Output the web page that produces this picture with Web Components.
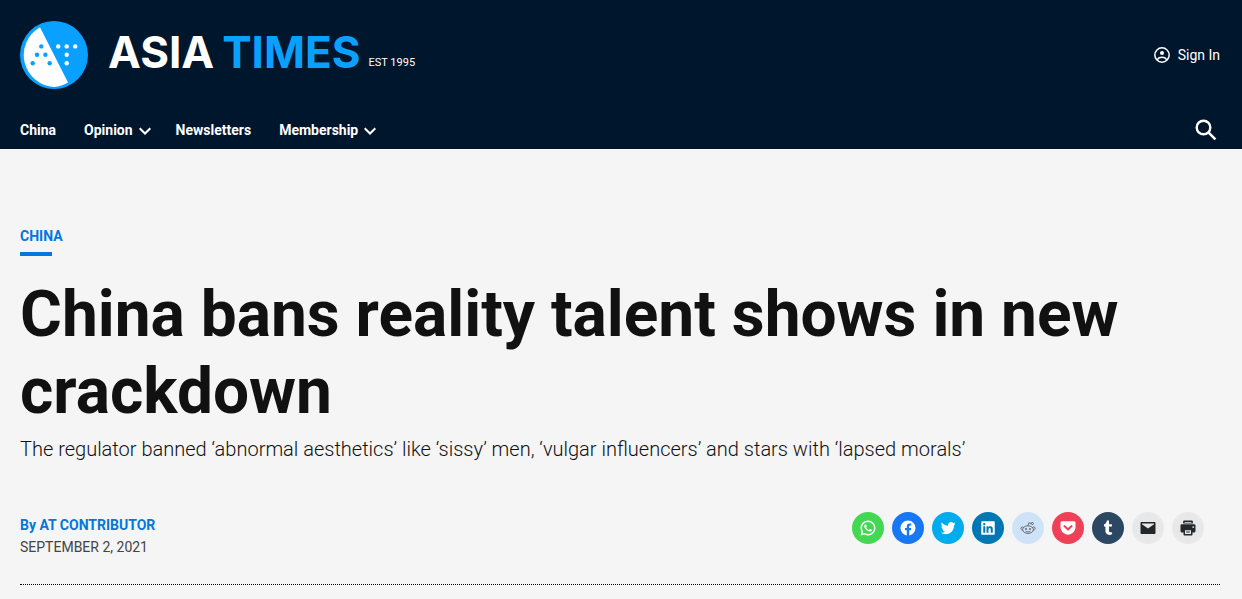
<!DOCTYPE html>
<html lang="en">
<head>
<meta charset="utf-8">
<meta name="viewport" content="width=device-width, initial-scale=1">
<title>China bans reality talent shows in new crackdown - Asia Times</title>
<style>
  body { margin: 0; background: #f5f5f5; color: #111; font-family: Roboto, sans-serif; font-size: 14px; }
</style>
</head>
<body>
<site-header>
  <nav-item href="#china">China</nav-item>
  <nav-item href="#opinion" menu>Opinion</nav-item>
  <nav-item href="#newsletters">Newsletters</nav-item>
  <nav-item href="#membership" menu>Membership</nav-item>
</site-header>
<article-header>
  <category-link slot="category" href="#china">China</category-link>
  <span slot="title">China bans reality talent shows in new crackdown</span>
  <span slot="summary">The regulator banned ‘abnormal aesthetics’ like ‘sissy’ men, ‘vulgar influencers’ and stars with ‘lapsed morals’</span>
  <by-line slot="byline" author="AT CONTRIBUTOR" datetime="2021-09-02">September 2, 2021</by-line>
  <share-bar slot="share"></share-bar>
</article-header>

<script>
const define = (name, markup, setup) => customElements.define(name, class extends HTMLElement {
  constructor() {
    super();
    const template = document.createElement('template');
    template.innerHTML = markup;
    this.attachShadow({ mode: 'open' }).append(template.content.cloneNode(true));
  }
  connectedCallback() { if (setup) setup(this, this.shadowRoot); }
});

define('site-logo', `
<style>
  :host { display: block; }
  a { display: flex; align-items: center; color: #fff; text-decoration: none; }
  svg { width: 68px; height: 68px; margin-right: 20px; }
  .name { font: 700 44px/52px Inter, sans-serif; display: flex; gap: 8px; margin-bottom: 6px; }
  .times { color: #0aa0ff; }
  .est { font-size: 11px; line-height: 16px; margin: 16px 0 0 8px; }
</style>
<a href="#home">
  <svg viewBox="0 0 68 68" aria-hidden="true">
    <circle cx="34" cy="34" r="34" fill="#0aa0ff"/>
    <path d="M20 6.2A32 32 0 0 0 34 66a32 32 0 0 0 14-4.5z" fill="#fff"/>
    <g fill="#0aa0ff"><circle cx="21.3" cy="25.4" r="2.2"/><circle cx="17" cy="33.8" r="2.2"/><circle cx="25.4" cy="33.8" r="2.2"/><circle cx="12.7" cy="42.2" r="2.2"/><circle cx="29.7" cy="42.2" r="2.2"/></g>
    <g fill="#fff"><circle cx="38.2" cy="25.4" r="2.2"/><circle cx="46.7" cy="25.4" r="2.2"/><circle cx="55.2" cy="25.4" r="2.2"/><circle cx="46.7" cy="33.8" r="2.2"/><circle cx="46.7" cy="42.2" r="2.2"/></g>
  </svg>
  <span class="name"><span>ASIA</span><span class="times">TIMES</span></span>
  <span class="est">EST 1995</span>
</a>`);

define('nav-item', `
<style>
  :host { display: block; }
  a { display: flex; align-items: center; gap: 6px; color: #fff; font-weight: 700; line-height: 20px; text-decoration: none; }
  svg { display: none; width: 12px; height: 8px; margin-top: 2px; }
  :host([menu]) svg { display: block; }
</style>
<a><slot></slot><svg viewBox="0 0 12 8" fill="none" stroke="#fff" stroke-width="2" aria-hidden="true"><path d="M.7 1.2 6 6.5l5.300-5.300"/></svg></a>`,
(host, root) => { root.querySelector('a').href = host.getAttribute('href'); });

define('site-header', `
<style>
  :host { display: block; background: #00162d; color: #fff; padding: 21px 22px 9px 20px; }
  .row { display: flex; align-items: center; justify-content: space-between; }
  .account { display: flex; align-items: center; gap: 8px; color: #fff; text-decoration: none; line-height: 20px; }
  .account svg { width: 16px; height: 16px; }
  .menu { margin-top: 31px; height: 20px; }
  nav { display: flex; gap: 28px; }
  nav ::slotted([menu]) { margin-right: -3px; }
  button { display: flex; border: 0; padding: 0; margin-right: 3px; background: none; color: #fff; cursor: pointer; }
  button svg { width: 22px; height: 22px; }
</style>
<header>
  <div class="row">
    <site-logo></site-logo>
    <a class="account" href="#signin">
      <svg viewBox="0 0 16 16" fill="none" stroke="#fff" stroke-width="1.500" aria-hidden="true"><circle cx="8" cy="8" r="7.200"/><circle cx="8" cy="6" r="2" fill="#fff" stroke="none"/><path d="M3.500 13.300v-1C4.300 11 6 10.300 8 10.300s3.700.7 4.500 2v1"/></svg>
      Sign In
    </a>
  </div>
  <div class="row menu">
    <nav aria-label="Main"><slot></slot></nav>
    <button type="button" aria-label="Search"><svg viewBox="0 0 22 22" fill="none" stroke="#fff" aria-hidden="true"><circle cx="8.500" cy="8.500" r="6.800" stroke-width="2.400"/><path d="m13.400 13.400 7 7" stroke-width="2.600"/></svg></button>
  </div>
</header>`);

define('category-link', `
<style>
  :host { display: block; }
  a { display: block; color: #0277dc; font-weight: 700; line-height: 20px; text-transform: uppercase; text-decoration: none; }
  a::after { content: ""; display: block; width: 32px; height: 4px; margin-top: 6px; background: currentColor; }
</style>
<a><slot></slot></a>`,
(host, root) => { root.querySelector('a').href = host.getAttribute('href'); });

define('by-line', `
<style>
  :host { display: block; line-height: 22px; }
  .author { color: #0277dc; font-weight: 700; }
  a { color: inherit; text-decoration: none; }
  time { display: block; color: #444; text-transform: uppercase; }
</style>
<div class="author">By <a href="#author"></a></div>
<time><slot></slot></time>`,
(host, root) => {
  root.querySelector('a').textContent = host.getAttribute('author');
  root.querySelector('time').dateTime = host.getAttribute('datetime');
});

define('share-link', `
<style>
  :host { display: block; }
  a { display: grid; place-items: center; width: 32px; height: 32px; border-radius: 50%; background: var(--share-background); color: var(--share-color, #fff); }
  svg { width: 18px; height: 18px; fill: currentColor; }
</style>
<a><svg viewBox="0 0 24 24" aria-hidden="true"></svg></a>`);

const services = [
  ['WhatsApp', '#43d854', '#fff', '<path fill-rule="evenodd" d="M12 2C6.500 2 2 6.500 2 12c0 1.760.480 3.460 1.350 4.980L2 22l5.230-1.240A10 10 0 0 0 12 21.980c5.500 0 10-4.480 10-9.990A9.990 9.990 0 0 0 12 2zm0 2a8 8 0 1 1-3.820 15.010l-.670-.370-.750.180-1.960.460.480-1.780.220-.800-.410-.720A8 8 0 0 1 12 4zM8.480 7.380c-.170 0-.440.060-.670.310-.230.250-.870.850-.870 2.080s.890 2.410 1.020 2.580c.120.170 1.720 2.770 4.260 3.770 2.110.830 2.540.660 2.990.620.460-.040 1.480-.600 1.690-1.190.210-.580.210-1.080.150-1.180-.060-.110-.230-.170-.480-.290-.250-.130-1.480-.730-1.710-.810-.230-.080-.400-.130-.560.120-.170.250-.640.810-.790.980-.150.170-.290.190-.540.070-.250-.130-1.050-.390-2.010-1.240-.740-.660-1.240-1.480-1.390-1.730-.140-.250-.010-.390.110-.510.110-.110.250-.290.380-.440.120-.140.160-.250.250-.420.080-.160.040-.310-.020-.430-.060-.130-.550-1.360-.770-1.850-.190-.420-.380-.430-.560-.440z"/>'],
  ['Facebook', '#1877f2', '#fff', '<path d="M12 2C6.500 2 2 6.500 2 12c0 5 3.700 9.100 8.400 9.900v-7H7.900V12h2.500V9.800c0-2.500 1.500-3.900 3.800-3.900 1.100 0 2.200.2 2.200.2v2.500h-1.300c-1.200 0-1.600.8-1.600 1.600V12h2.800l-.4 2.900h-2.300v7C18.300 21.100 22 17 22 12c0-5.500-4.500-10-10-10z"/>'],
  ['Twitter', '#00aced', '#fff', '<path d="M22.230 5.924c-.736.326-1.527.547-2.357.646.847-.508 1.498-1.312 1.804-2.270-.793.470-1.671.812-2.606.996C18.324 4.498 17.257 4 16.077 4c-2.266 0-4.103 1.837-4.103 4.103 0 .322.036.635.106.935C8.670 8.867 5.647 7.234 3.623 4.751c-.353.606-.556 1.311-.556 2.063 0 1.424.724 2.679 1.825 3.415-.673-.021-1.305-.206-1.859-.513v.052c0 1.988 1.414 3.647 3.292 4.023-.344.094-.707.144-1.081.144-.264 0-.521-.026-.772-.074.522 1.630 2.038 2.816 3.833 2.850-1.404 1.100-3.174 1.756-5.096 1.756-.331 0-.658-.019-.979-.057 1.816 1.164 3.973 1.843 6.290 1.843 7.547 0 11.675-6.252 11.675-11.675 0-.178-.004-.355-.012-.531.801-.577 1.496-1.300 2.046-2.123z"/>'],
  ['LinkedIn', '#0077b5', '#fff', '<path fill-rule="evenodd" d="M19.700 3H4.300C3.582 3 3 3.582 3 4.300v15.400c0 .718.582 1.300 1.300 1.300h15.400c.718 0 1.300-.582 1.300-1.300V4.300c0-.718-.582-1.300-1.300-1.300zM8.339 18.338H5.667v-8.590h2.672zM7.004 8.574a1.548 1.548 0 1 1 0-3.096 1.548 1.548 0 0 1 0 3.096zm11.335 9.764H15.670v-4.177c0-.996-.017-2.278-1.387-2.278-1.389 0-1.601 1.086-1.601 2.206v4.249h-2.667v-8.590h2.559v1.174h.037c.356-.675 1.227-1.387 2.526-1.387 2.703 0 3.203 1.779 3.203 4.092z"/>'],
  ['Reddit', '#cee3f8', '#555', '<g transform="translate(1.700 1.700) scale(.86)"><g fill="none" stroke="currentColor" stroke-width="1.300"><ellipse cx="12" cy="14.500" rx="8.300" ry="5.900"/><path d="M5 11.200a2.300 2.300 0 1 0-1.700 3.800M19 11.200a2.300 2.300 0 1 1 1.700 3.800M12 8.500l1.200-4.600 4 1M8.300 16.900c2 1.500 5.400 1.500 7.400 0"/><circle cx="18.700" cy="5" r="1.600"/></g><circle cx="8.900" cy="13.400" r="1.400"/><circle cx="15.100" cy="13.400" r="1.400"/></g>'],
  ['Pocket', '#ee4056', '#fff', '<path fill-rule="evenodd" d="M21.927 4.194A1.820 1.820 0 0 0 20.222 3H3.839c-.747 0-1.428.470-1.694 1.170-.079.208-.119.424-.119.644v6.035l.069 1.200c.290 2.730 1.707 5.115 3.899 6.778a9.900 9.900 0 0 0 12.064 0c2.192-1.664 3.609-4.049 3.898-6.778l.069-1.200V4.814c0-.209-.025-.416-.098-.620zm-4.235 6.287-4.704 4.512a1.370 1.370 0 0 1-1.898 0l-4.705-4.512a1.371 1.371 0 0 1 1.898-1.979l3.756 3.601 3.755-3.601a1.371 1.371 0 0 1 1.898 1.979z"/>'],
  ['Tumblr', '#2c4762', '#fff', '<path d="M16.749 17.396c-.357.170-1.041.319-1.551.332-1.539.041-1.837-1.081-1.850-1.896V9.847h3.861v-2.910h-3.847V2.039h-2.817c-.046 0-.127.041-.138.144-.165 1.499-.867 4.130-3.783 5.181v2.484h1.945v6.282c0 2.151 1.587 5.206 5.775 5.135 1.413-.024 2.982-.616 3.329-1.126z"/>'],
  ['Email', '#e8e8e8', '#23282d', '<path d="M3.300 4h17.400c.7 0 1.300.6 1.300 1.300v13.400c0 .7-.6 1.300-1.300 1.300H3.300c-.7 0-1.300-.6-1.300-1.300V5.300C2 4.600 2.600 4 3.300 4z"/><path d="M4 6h16v1l-8 5.500L4 7z" fill="#e8e8e8"/>'],
  ['Print', '#e8e8e8', '#23282d', '<path fill-rule="evenodd" d="M7 2h10a1.500 1.500 0 0 1 1.500 1.500V6h-13V3.500A1.500 1.500 0 0 1 7 2zM7.500 4v1h9V4zM3.500 7h17A1.500 1.500 0 0 1 22 8.500V16a2 2 0 0 1-2 2h-2v2.500a1.500 1.500 0 0 1-1.500 1.500h-9A1.500 1.500 0 0 1 6 20.500V18H4a2 2 0 0 1-2-2V8.500A1.500 1.500 0 0 1 3.500 7zM8 15v5h8v-5zM19 9.500a1.200 1.200 0 1 0 0 2.400 1.200 1.200 0 0 0 0-2.400zM9.500 16.500h5V18h-5z"/>'],
];

define('share-bar', `
<style>
  :host { display: block; }
  ul { display: flex; flex-wrap: wrap; gap: 8px; list-style: none; margin: 0; padding: 0; }
</style>
<ul aria-label="Share"></ul>`,
(host, root) => {
  for (const [name, background, color, shapes] of services) {
    const item = document.createElement('li');
    const link = document.createElement('share-link');
    link.style.setProperty('--share-background', background);
    link.style.setProperty('--share-color', color);
    const anchor = link.shadowRoot.querySelector('a');
    anchor.href = '#share-' + name.toLowerCase();
    anchor.setAttribute('aria-label', 'Share on ' + name);
    anchor.querySelector('svg').innerHTML = shapes;
    item.append(link);
    root.querySelector('ul').append(item);
  }
});

define('article-header', `
<style>
  :host { display: block; padding: 77px 22px 0 20px; }
  h1 { margin: 20px 0 0; font-size: 64px; font-weight: 700; line-height: 77px; }
  p { margin: 3px 0 0; font-size: 20px; font-weight: 300; line-height: 32px; }
  .meta { display: flex; justify-content: space-between; align-items: flex-start; margin-top: 47px; padding: 0 16px 26px 0; }
  .meta ::slotted(by-line) { padding-top: 2px; }
  .rule { border: 0; border-top: 1px dotted #000; margin: 0; }
</style>
<header>
  <slot name="category"></slot>
  <h1><slot name="title"></slot></h1>
  <p><slot name="summary"></slot></p>
  <div class="meta"><slot name="byline"></slot><slot name="share"></slot></div>
  <hr class="rule">
</header>`);
</script>
</body>
</html>
